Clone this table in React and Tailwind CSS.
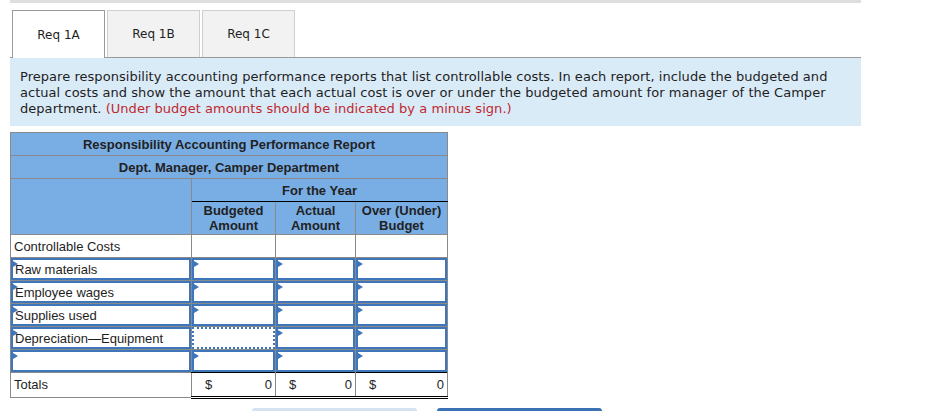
import React from "react";
import clsx from "clsx";

const costRows = ["Raw materials", "Employee wages", "Supplies used", "Depreciation—Equipment", ""];

// little blue marker in the corner of each entry box
const Flag = () => (
  <span className="absolute left-0 top-[1px] w-0 h-0 border-y-[3px] border-y-transparent border-l-[5px] border-l-[#3d76bb]" />
);

const Entry = ({ children, dotted }) => (
  <div
    className={clsx(
      "relative h-[22px] border-2 border-[#3d76bb] bg-white pl-[2px] leading-[19px] whitespace-nowrap",
      dotted && "border-dotted"
    )}
  >
    {!dotted && <Flag />}
    {children}
  </div>
);

const Tab = ({ label, active }) => (
  <div
    className={clsx(
      "w-[93px] h-[47px] flex items-center justify-center border text-[12px]",
      active ? "bg-white border-[#9a9a9a] border-b-0 -mb-px h-[48px]" : "bg-[#f2f2f2] border-[#cfcfcf] border-b-0"
    )}
  >
    {label}
  </div>
);

const App = () => {
  return (
    <div className="w-[947px] h-[411px] overflow-hidden bg-white text-[#1e1e1e]">
      <div className="ml-[10px] w-[851px] h-[3px] bg-[#dedede]" />

      {/* tabs */}
      <div className="ml-[10px] mt-[7px] w-[851px] pl-[2px] flex items-end gap-[2px] border-b border-[#9a9a9a] font-['DejaVu_Sans',sans-serif]">
        <Tab label="Req 1A" active />
        <Tab label="Req 1B" />
        <Tab label="Req 1C" />
      </div>

      {/* instructions */}
      <div className="ml-[10px] w-[851px] h-[68px] bg-[#daebf8] px-[10px] pt-[11px] text-[13px] leading-[16px] font-['DejaVu_Sans',sans-serif] tracking-[0.04px]">
        Prepare responsibility accounting performance reports that list controllable costs. In each report, include the budgeted and
        actual costs and show the amount that each actual cost is over or under the budgeted amount for manager of the Camper
        department. <span className="text-[#c0282e]">(Under budget amounts should be indicated by a minus sign.)</span>
      </div>

      {/* report */}
      <table className="ml-[10px] mt-[6px] w-[437px] table-fixed border-collapse text-[13px] font-['Liberation_Sans',Arial,sans-serif]">
        <colgroup>
          <col className="w-[181px]" />
          <col className="w-[84px]" />
          <col className="w-[80px]" />
          <col className="w-[92px]" />
        </colgroup>
        <thead className="bg-[#79aee5] font-bold text-[#222]">
          <tr className="h-[23px]">
            <th colSpan={4} className="border border-[#8a8a8a] p-0 pt-px font-bold">
              Responsibility Accounting Performance Report
            </th>
          </tr>
          <tr className="h-[23px]">
            <th colSpan={4} className="border border-[#8a8a8a] p-0 pt-px font-bold">
              Dept. Manager, Camper Department
            </th>
          </tr>
          <tr className="h-[23px]">
            <th rowSpan={2} className="border border-[#8a8a8a] p-0" />
            <th colSpan={3} className="border border-[#8a8a8a] border-b-black p-0 pt-px font-bold">
              For the Year
            </th>
          </tr>
          <tr className="h-[33px] leading-[15px]">
            <th className="border border-[#8a8a8a] border-t-black p-0 font-bold">
              Budgeted
              <br />
              Amount
            </th>
            <th className="border border-[#8a8a8a] border-t-black p-0 font-bold">
              Actual
              <br />
              Amount
            </th>
            <th className="border border-[#8a8a8a] border-t-black p-0 font-bold">
              Over (Under)
              <br />
              Budget
            </th>
          </tr>
        </thead>
        <tbody>
          <tr className="h-[23px]">
            <td className="border border-[#8a8a8a] px-[3px] pt-px pb-0">Controllable Costs</td>
            <td className="border border-[#8a8a8a] p-0" />
            <td className="border border-[#8a8a8a] p-0" />
            <td className="border border-[#8a8a8a] p-0" />
          </tr>
          {costRows.map((name, i) => (
            <tr key={i} className="h-[23px]">
              <td className="border border-[#8a8a8a] p-0">
                <Entry>{name}</Entry>
              </td>
              <td className="border border-[#8a8a8a] p-0">
                <Entry dotted={i === 3} />
              </td>
              <td className="border border-[#8a8a8a] p-0">
                <Entry />
              </td>
              <td className="border border-[#8a8a8a] p-0">
                <Entry />
              </td>
            </tr>
          ))}
          <tr className="h-[25px]">
            <td className="border border-[#8a8a8a] px-[3px] py-0">Totals</td>
            {[0, 1, 2].map((k) => (
              <td
                key={k}
                className="border border-[#8a8a8a] border-t-black border-b-[3px] border-b-black border-double p-0"
              >
                <div className="flex justify-between pl-[13px] pr-[3px]">
                  <span>$</span>
                  <span>0</span>
                </div>
              </td>
            ))}
          </tr>
        </tbody>
      </table>

      {/* buttons, cut off by the window */}
      <div className="mt-[9px] ml-[252px] flex gap-[20px]">
        <div className="w-[165px] h-[20px] rounded-[3px] bg-[#d6e2f1]" />
        <div className="w-[165px] h-[20px] rounded-[3px] bg-[#3a72b5]" />
      </div>
    </div>
  );
};

export default App;
